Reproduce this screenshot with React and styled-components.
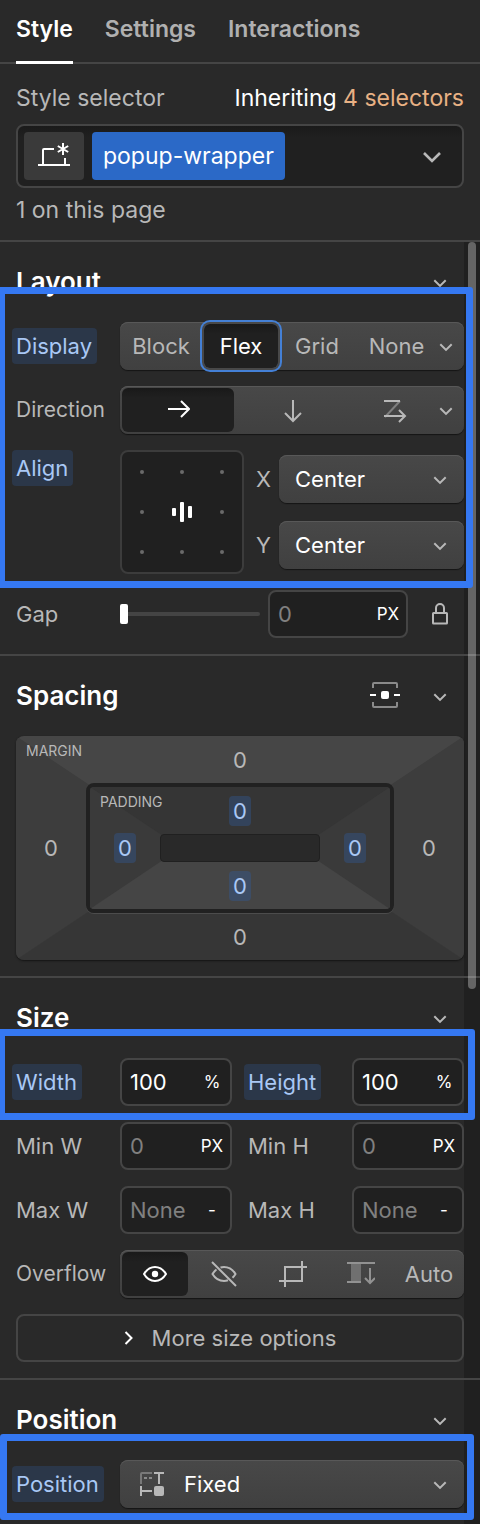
import React from "react";
import styled, { createGlobalStyle, css } from "styled-components";

const c = {
  bg: "#292929",
  gutter: "#202020",
  field: "#202020",
  line: "#454545",
  text: "#b8b8b8",
  dim: "#808080",
  white: "#ffffff",
  blueText: "#a9c8f5",
  blueBg: "#2b3749",
  mark: "#3578f2",
};

const Global = createGlobalStyle`
  *, *::before, *::after { box-sizing: border-box; }
  body {
    margin: 0;
    background: ${c.bg};
    color: ${c.text};
    font-family: Inter, "Liberation Sans", sans-serif;
    font-size: 22px;
    line-height: 28px;
  }
  button, input, select { font: inherit; color: inherit; margin: 0; }
  button { background: none; border: 0; padding: 0; cursor: pointer; }
`;

const Panel = styled.main`
  overflow: hidden;
`;

/* ---------- Tabs and selector ---------- */

const Tabs = styled.nav`
  display: flex;
  gap: 32px;
  height: 64px;
  padding: 0 16px;
  border-bottom: 2px solid ${c.line};
`;

const Tab = styled.button`
  height: 64px;
  padding-bottom: 3px;
  font-size: 23px;
  font-weight: 600;
  color: ${(p) => (p.$active ? c.white : "#b0b0b0")};
  border-bottom: 3px solid ${(p) => (p.$active ? c.white : "transparent")};
`;

const SelectorHead = styled.header`
  padding: 20px 16px 16px;
  font-size: 23px;
  border-bottom: 2px solid ${c.line};
`;

const Split = styled.div`
  display: flex;
  justify-content: space-between;
`;

const Inherit = styled.span`
  color: ${c.white};
`;

const InheritLink = styled.a`
  color: #e8b184;
  text-decoration: none;
`;

const SelectorBox = styled.div`
  display: flex;
  align-items: center;
  gap: 8px;
  height: 64px;
  margin: 12px 0 8px;
  padding: 0 6px;
  border: 2px solid ${c.line};
  border-radius: 8px;
  background: linear-gradient(#1a1a1a, ${c.field} 12px);
`;

const StateButton = styled.button`
  display: grid;
  place-items: center;
  width: 60px;
  height: 48px;
  border-radius: 4px;
  color: ${c.white};
  background: #3a3a3a;
`;

const Chip = styled.button`
  height: 48px;
  padding: 0 11px;
  border-radius: 4px;
  color: ${c.white};
  background: #2b69c7;
`;

const OpenButton = styled.button`
  display: grid;
  place-items: center;
  width: 48px;
  height: 48px;
  margin-left: auto;
`;

/* ---------- Sections ---------- */

const ScrollRegion = styled.div`
  position: relative;
  background: linear-gradient(to left, ${c.gutter} 16px, transparent 16px);
`;

const Thumb = styled.div`
  position: absolute;
  z-index: 1;
  top: 0;
  right: 4px;
  width: 8px;
  height: 58.3%;
  border-radius: 4px;
  background: rgba(255, 255, 255, 0.31);
`;

const SectionBox = styled.section`
  position: relative;
  padding: 0 16px 16px;

  & + & {
    border-top: 2px solid ${c.line};
  }
`;

const SectionHead = styled.div`
  display: flex;
  align-items: center;
  height: 80px;
`;

const Title = styled.h2`
  flex: 1;
  margin: 0;
  font-size: 26px;
  font-weight: 600;
  color: ${c.white};
`;

const HeadButton = styled.button`
  display: grid;
  place-items: center;
  width: 48px;
  height: 48px;
`;

const BoxModeButton = styled(HeadButton)`
  margin-right: 7px;
`;

/* Outline that calls out a group of properties. */
const Highlight = styled.div`
  position: absolute;
  z-index: 2;
  top: ${(p) => p.$top}px;
  right: ${(p) => p.$right}px;
  left: ${(p) => p.$left}px;
  height: ${(p) => p.$height}px;
  border: 7px solid ${c.mark};
  border-radius: 3px;
  pointer-events: none;
`;

const Stack = styled.div`
  display: flex;
  flex-direction: column;
  gap: 16px;
`;

const Row = styled.div`
  display: flex;
  align-items: ${(p) => (p.$top ? "flex-start" : "center")};
`;

const Pair = styled.div`
  display: grid;
  grid-template-columns: 1fr 1fr;
  gap: 16px;
`;

const LabelCell = styled.div`
  flex: none;
  width: 104px;
`;

const Label = styled.label`
  display: inline-block;
  white-space: nowrap;
  font-size: ${(p) => (p.$small ? 21 : 22)}px;
  line-height: 36px;
  ${(p) =>
    p.$set &&
    css`
      margin-left: -4px;
      padding: 0 5px 0 4px;
      border-radius: 4px;
      color: ${c.blueText};
      background: ${c.blueBg};
    `}
`;

/* ---------- Controls ---------- */

const raised = css`
  border-radius: 8px;
  background: linear-gradient(#484848, #404040);
  box-shadow: inset 0 1px 0 #585858, 0 1px 1px #141414;
`;

const Segments = styled.div`
  flex: 1;
  display: grid;
  grid-template-columns: ${(p) => p.$cols};
  height: 48px;
  ${raised}
`;

const Segment = styled.button`
  display: grid;
  place-items: center;
  min-width: 0;
  height: 48px;
  ${(p) =>
    p.$active &&
    css`
      height: 44px;
      margin: 2px;
      border-radius: 6px;
      color: ${c.white};
      background: linear-gradient(#191919, ${c.field} 10px);
    `}
  ${(p) =>
    p.$focus &&
    css`
      box-shadow: 0 0 0 2px #484848, 0 0 0 4px #4480d6;
    `}
`;

const SegmentMore = styled(Segment)`
  justify-items: start;
`;

const AlignGrid = styled.div`
  display: grid;
  grid-template: repeat(3, 40px) / repeat(3, 40px);
  border: 2px solid #3c3c3c;
  border-radius: 8px;
  background: ${c.field};
`;

const AlignCell = styled.button`
  display: grid;
  place-items: center;
  color: ${c.white};
`;

const Dot = styled.span`
  width: 4px;
  height: 4px;
  border-radius: 2px;
  background: #6a6a6a;
`;

const AxisStack = styled.div`
  flex: 1;
  display: flex;
  flex-direction: column;
  gap: 18px;
  padding: 5px 0 0 12px;
`;

const AxisLabel = styled.label`
  flex: none;
  width: 23px;
`;

const SelectWrap = styled.div`
  position: relative;
  flex: 1;
  min-width: 0;
`;

const SelectBox = styled.select`
  display: block;
  appearance: none;
  width: 100%;
  height: 48px;
  padding: 0 48px 0 ${(p) => (p.$icon ? 64 : 16)}px;
  border: 0;
  color: ${c.white};
  ${raised}
`;

const SelectMark = styled.span`
  position: absolute;
  top: 0;
  bottom: 0;
  ${(p) => (p.$start ? "left: 20px;" : "right: 17px;")}
  display: grid;
  place-items: center;
  pointer-events: none;
`;

const Slider = styled.input`
  appearance: none;
  flex: 1;
  min-width: 0;
  height: 20px;
  background: transparent;

  &::-webkit-slider-runnable-track {
    height: 4px;
    border-radius: 2px;
    background: #444;
  }
  &::-webkit-slider-thumb {
    appearance: none;
    width: 8px;
    height: 20px;
    margin-top: -8px;
    border-radius: 2px;
    background: ${c.white};
  }
`;

const FieldBox = styled.div`
  flex: ${(p) => (p.$fixed ? "none" : 1)};
  ${(p) => p.$fixed && "width: 140px; margin-left: 8px;"}
  display: flex;
  min-width: 0;
  height: 48px;
  border: 2px solid ${c.line};
  border-radius: 8px;
  background: ${c.field};
`;

const TextInput = styled.input`
  flex: 1;
  min-width: 0;
  width: 0;
  padding: 0 0 0 8px;
  border: 0;
  outline: 0;
  background: none;
  color: ${c.white};

  &::placeholder {
    color: ${c.dim};
    opacity: 1;
  }
`;

const Unit = styled.button`
  width: 36px;
  font-size: 17px;
  color: ${c.white};
`;

const LockButton = styled.button`
  display: grid;
  place-items: center;
  width: 48px;
  height: 48px;
  margin-left: 8px;
`;

const MoreButton = styled.button`
  display: flex;
  align-items: center;
  justify-content: center;
  gap: 12px;
  height: 48px;
  padding-right: 28px;
  border: 2px solid ${c.line};
  border-radius: 8px;
`;

/* ---------- Box model ---------- */

/* The mitred sides come from a frame whose four borders differ in shade. */
const BoxLevel = styled.div`
  position: relative;
  display: grid;
  grid-template: ${(p) => p.$rows} / 70px 1fr 70px;
  place-items: center;
  border-radius: 8px;

  &::before {
    content: "";
    position: absolute;
    inset: 0;
    border-style: solid;
    border-width: ${(p) => p.$frame};
    border-color: ${(p) => p.$shades};
    border-radius: inherit;
  }
`;

const MarginLevel = styled(BoxLevel)`
  box-shadow: 0 1px 2px #141414;
`;

const PaddingLevel = styled(BoxLevel)`
  grid-area: 2 / 2;
  align-self: stretch;
  justify-self: stretch;
  border: 4px solid #212121;
  box-shadow: 0 1px 0 #4c4c4c;

  &::before {
    border-radius: 4px;
  }
`;

const BoxCore = styled.div`
  position: relative;
  grid-area: 2 / 2;
  align-self: stretch;
  justify-self: stretch;
  border: 1px solid #202020;
  border-radius: 4px;
  background: ${c.bg};
`;

const BoxTag = styled.span`
  position: relative;
  grid-area: 1 / 1;
  align-self: start;
  justify-self: start;
  padding: 4px 0 0 10px;
  font-size: 14px;
  line-height: 22px;
  white-space: nowrap;
`;

const BoxValue = styled.button`
  position: relative;
  grid-area: ${(p) => p.$area};
  width: 22px;
  line-height: 30px;
  ${(p) =>
    p.$set &&
    css`
      border-radius: 4px;
      color: ${c.blueText};
      background: rgba(49, 88, 145, 0.42);
    `}
`;

/* ---------- Icons ---------- */

const Svg = ({ w, h = w, children, stroke = 2, ...rest }) => (
  <svg
    width={w}
    height={h}
    viewBox={`0 0 ${w} ${h}`}
    fill="none"
    stroke="currentColor"
    strokeWidth={stroke}
    aria-hidden="true"
    {...rest}
  >
    {children}
  </svg>
);

const Chevron = () => (
  <Svg w={14} h={12}>
    <path d="M1.300 4.200L7 9.900l5.700-5.700" />
  </Svg>
);
const BigChevron = () => (
  <Svg w={20} h={16} stroke={2.6}>
    <path d="M2 5l8 8 8-8" />
  </Svg>
);
const ChevronRight = () => (
  <Svg w={24}>
    <path d="M9.500 6l6 6-6 6" stroke="#fff" />
  </Svg>
);
const StateIcon = () => (
  <Svg w={32}>
    <path d="M0 25h32M5 25V10q0-1 1-1h10M27 25v-7" />
    <path d="M25 3v12M19.800 6l10.400 6M30.200 6l-10.400 6" />
  </Svg>
);
const ArrowRight = () => (
  <Svg w={24}>
    <path d="M2 11h21M15 3l8 8-8 8" />
  </Svg>
);
const ArrowDown = () => (
  <Svg w={26}>
    <path d="M14 3v21M6 16l8 8 8-8" />
  </Svg>
);
const WrapIcon = () => (
  <Svg w={26} h={28}>
    <path d="M19 5L4 21" opacity="0.5" />
    <path d="M3 5h16M3 20h21M18 14l6 6-6 6" />
  </Svg>
);
const AlignCenterIcon = () => (
  <Svg w={20} fill="currentColor" stroke={0}>
    <rect x="0" y="6" width="4" height="8" rx="1" />
    <rect x="8" y="0" width="4" height="20" rx="1" />
    <rect x="16" y="4" width="4" height="12" rx="1" />
  </Svg>
);
const LockIcon = () => (
  <Svg w={24}>
    <rect x="5" y="11" width="14" height="10.500" rx="0.500" />
    <path d="M8 11V6a4 4 0 0 1 8 0v5" />
  </Svg>
);
const BoxModeIcon = () => (
  <Svg w={30}>
    <path d="M3 7V3q0-1 1-1h22q1 0 1 1v4M3 21v4q0 1 1 1h22q1 0 1-1v-4" stroke="#8a8a8a" />
    <path d="M0 14h6M24 14h6" stroke="#fff" />
    <rect x="11" y="10" width="8" height="8" rx="2" fill="#fff" stroke="none" />
  </Svg>
);
const EyeIcon = () => (
  <Svg w={24}>
    <path d="M1 12C4 7 8 5 12 5s8 2 11 7c-3 5-7 7-11 7S4 17 1 12z" />
    <circle cx="12" cy="12" r="3.200" fill="currentColor" stroke="none" />
  </Svg>
);
const EyeOffIcon = () => (
  <Svg w={26}>
    <path d="M1 1l24 24" />
    <path d="M5.500 8.500Q3 10.500 1.500 13C4.500 18 8.500 20 13 20q2 0 4-.700M9.500 6.500Q11 6 13 6c4.500 0 8.500 2 11.500 7q-1.300 2.200-3 3.700" />
  </Svg>
);
const CropIcon = () => (
  <Svg w={28}>
    <path d="M5 7h23M6 7v20M0 21h23M23 1v21" />
  </Svg>
);
const ScrollIcon = () => (
  <Svg w={28} color="#929292">
    <path d="M4 3h10v19H4z" fill="#707070" stroke="none" />
    <path d="M0 3h28M0 22h14M23 8v15M18 18l5 5 5-5" />
  </Svg>
);
const FixedIcon = () => (
  <Svg w={24}>
    <path d="M1 12V2q0-1 1-1h10" opacity="0.45" />
    <path d="M4 6h3M9 6h3" stroke="#8a8a8a" />
    <path d="M14 1h10M19 1v11M1 14v10M1 19h11" />
    <rect x="14" y="14" width="10" height="10" rx="2" fill="currentColor" stroke="none" />
  </Svg>
);

/* ---------- Composite parts ---------- */

const Section = ({ title, extra, children }) => (
  <SectionBox aria-label={title}>
    <SectionHead>
      <Title>{title}</Title>
      {extra}
      <HeadButton aria-label={`Collapse ${title}`}>
        <Chevron />
      </HeadButton>
    </SectionHead>
    {children}
  </SectionBox>
);

const Field = ({ id, label, set, value, placeholder, unit }) => (
  <Row>
    <LabelCell>
      <Label htmlFor={id} $set={set}>
        {label}
      </Label>
    </LabelCell>
    <FieldBox>
      <TextInput id={id} defaultValue={value} placeholder={placeholder} />
      <Unit aria-label={`${label} unit`}>{unit}</Unit>
    </FieldBox>
  </Row>
);

const Picker = ({ id, value, icon }) => (
  <SelectWrap>
    <SelectBox id={id} defaultValue={value} $icon={Boolean(icon)}>
      <option>{value}</option>
    </SelectBox>
    {icon && <SelectMark $start>{icon}</SelectMark>}
    <SelectMark>
      <Chevron />
    </SelectMark>
  </SelectWrap>
);

const alignCells = [0, 1, 2, 3, 4, 5, 6, 7, 8];

export default function App() {
  return (
    <Panel>
      <Global />
      <Tabs aria-label="Panels">
        <Tab $active>Style</Tab>
        <Tab>Settings</Tab>
        <Tab>Interactions</Tab>
      </Tabs>

      <SelectorHead>
        <Split>
          <span>Style selector</span>
          <Inherit>
            Inheriting <InheritLink href="#selectors">4 selectors</InheritLink>
          </Inherit>
        </Split>
        <SelectorBox>
          <StateButton aria-label="States">
            <StateIcon />
          </StateButton>
          <Chip>popup-wrapper</Chip>
          <OpenButton aria-label="Open selector list">
            <BigChevron />
          </OpenButton>
        </SelectorBox>
        <div>1 on this page</div>
      </SelectorHead>

      <ScrollRegion>
        <Section title="Layout">
          <Stack>
            <Row>
              <LabelCell>
                <Label as="span" $set>Display</Label>
              </LabelCell>
              <Segments $cols="82fr 78fr 74fr 85fr 25fr" role="group" aria-label="Display">
                <Segment>Block</Segment>
                <Segment $active $focus>Flex</Segment>
                <Segment>Grid</Segment>
                <Segment>None</Segment>
                <SegmentMore aria-label="More display values">
                  <Chevron />
                </SegmentMore>
              </Segments>
            </Row>
            <Row>
              <LabelCell>
                <Label as="span" $small>Direction</Label>
              </LabelCell>
              <Segments $cols="116fr 112fr 91fr 25fr" role="group" aria-label="Direction">
                <Segment $active aria-label="Horizontal"><ArrowRight /></Segment>
                <Segment aria-label="Vertical"><ArrowDown /></Segment>
                <Segment aria-label="Wrap"><WrapIcon /></Segment>
                <SegmentMore aria-label="More directions">
                  <Chevron />
                </SegmentMore>
              </Segments>
            </Row>
            <Row $top>
              <LabelCell>
                <Label as="span" $set>Align</Label>
              </LabelCell>
              <AlignGrid role="group" aria-label="Align">
                {alignCells.map((i) => (
                  <AlignCell key={i} aria-label={`Align cell ${i + 1}`}>
                    {i === 4 ? <AlignCenterIcon /> : <Dot />}
                  </AlignCell>
                ))}
              </AlignGrid>
              <AxisStack>
                <Row>
                  <AxisLabel htmlFor="align-x">X</AxisLabel>
                  <Picker id="align-x" value="Center" />
                </Row>
                <Row>
                  <AxisLabel htmlFor="align-y">Y</AxisLabel>
                  <Picker id="align-y" value="Center" />
                </Row>
              </AxisStack>
            </Row>
            <Row>
              <LabelCell>
                <Label htmlFor="gap">Gap</Label>
              </LabelCell>
              <Slider type="range" min="0" max="100" defaultValue="0" aria-label="Gap slider" />
              <FieldBox $fixed>
                <TextInput id="gap" placeholder="0" />
                <Unit aria-label="Gap unit">PX</Unit>
              </FieldBox>
              <LockButton aria-label="Lock row and column gap">
                <LockIcon />
              </LockButton>
            </Row>
          </Stack>
          <Highlight $top={45} $height={301} $left={-2} $right={7} />
        </Section>

        <Section
          title="Spacing"
          extra={
            <BoxModeButton aria-label="Center element">
              <BoxModeIcon />
            </BoxModeButton>
          }
        >
          <MarginLevel
            $rows="47px 130px 47px"
            $frame="112px 168px"
            $shades="#464646 #3d3d3d #363636 #3d3d3d"
          >
            <BoxTag>MARGIN</BoxTag>
            <BoxValue $area="1 / 2">0</BoxValue>
            <BoxValue $area="2 / 1">0</BoxValue>
            <BoxValue $area="2 / 3">0</BoxValue>
            <BoxValue $area="3 / 2">0</BoxValue>
            <PaddingLevel
              $rows="47px minmax(0, 1fr) 47px"
              $frame="61px 91px"
              $shades="#353535 #3a3a3a #454545 #3a3a3a"
            >
              <BoxTag>PADDING</BoxTag>
              <BoxValue $set $area="1 / 2">0</BoxValue>
              <BoxValue $set $area="2 / 1">0</BoxValue>
              <BoxValue $set $area="2 / 3">0</BoxValue>
              <BoxValue $set $area="3 / 2">0</BoxValue>
              <BoxCore />
            </PaddingLevel>
          </MarginLevel>
        </Section>

        <Section title="Size">
          <Stack>
            <Pair>
              <Field id="width" label="Width" set value="100" unit="%" />
              <Field id="height" label="Height" set value="100" unit="%" />
            </Pair>
            <Pair>
              <Field id="min-w" label="Min W" placeholder="0" unit="PX" />
              <Field id="min-h" label="Min H" placeholder="0" unit="PX" />
            </Pair>
            <Pair>
              <Field id="max-w" label="Max W" placeholder="None" unit="-" />
              <Field id="max-h" label="Max H" placeholder="None" unit="-" />
            </Pair>
            <Row>
              <LabelCell>
                <Label as="span" $small>Overflow</Label>
              </LabelCell>
              <Segments $cols="70fr 68fr 69fr 67fr 70fr" role="group" aria-label="Overflow">
                <Segment $active aria-label="Visible"><EyeIcon /></Segment>
                <Segment aria-label="Hidden"><EyeOffIcon /></Segment>
                <Segment aria-label="Clip"><CropIcon /></Segment>
                <Segment aria-label="Scroll"><ScrollIcon /></Segment>
                <Segment>Auto</Segment>
              </Segments>
            </Row>
            <MoreButton>
              <ChevronRight />
              More size options
            </MoreButton>
          </Stack>
          <Highlight $top={51} $height={91} $left={-2} $right={5} />
        </Section>

        <Section title="Position">
          <Row>
            <LabelCell>
              <Label htmlFor="position" $set>Position</Label>
            </LabelCell>
            <Picker id="position" value="Fixed" icon={<FixedIcon />} />
          </Row>
          <Highlight $top={54} $height={86} $left={0} $right={6} />
        </Section>
        <Thumb />
      </ScrollRegion>
    </Panel>
  );
}
